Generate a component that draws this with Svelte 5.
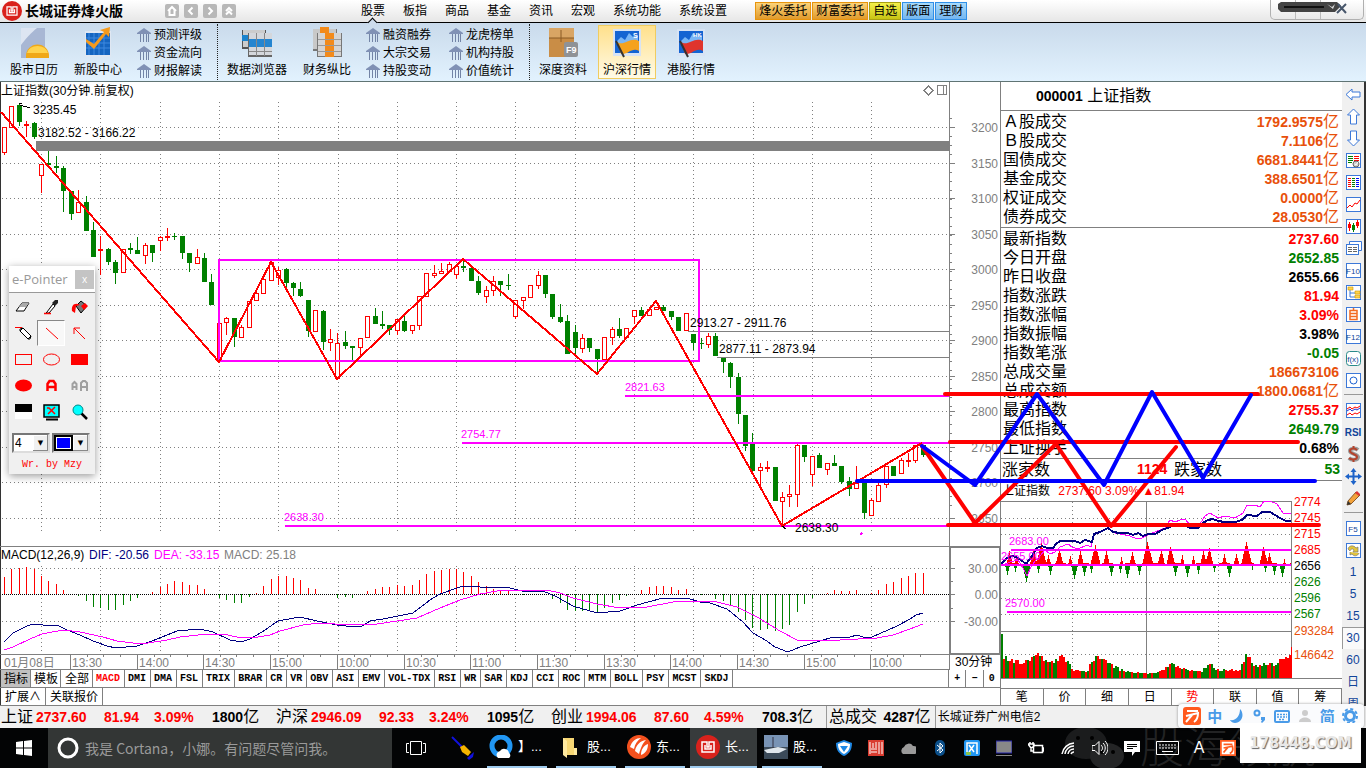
<script>
  const menus = ['股票', '板指', '商品', '基金', '资讯', '宏观', '系统功能', '系统设置']
  const trade = [
    ['烽火委托', 'orange'],
    ['财富委托', 'orange'],
    ['自选', 'yellow'],
    ['版面', 'blue'],
    ['理财', 'blue']
  ]
  const navIcons = ['M3 7l4-4 4 4M4.500 6v5h5V6', 'M8.500 3.500L5 7l3.500 3.500', 'M5.500 3.500L9 7l-3.500 3.500', 'M4 7l3-3 3 3M4 10.500l3-3 3 3']

  // [type, high, top, bottom, low], r = rising, g = falling
  const candles = [
    ['r', 127, 127, 152, 155], ['r', 106, 106, 127, 127], ['g', 103, 105, 122, 126], ['r', 121, 124, 125, 137],
    ['g', 122, 123, 137, 139], ['r', 164, 164, 175, 193], ['g', 151, 163, 165, 165], ['g', 156, 166, 168, 173],
    ['g', 166, 168, 191, 212], ['g', 191, 191, 214, 220], ['r', 190, 202, 212, 212], ['g', 196, 202, 231, 231],
    ['g', 222, 230, 257, 257], ['r', 236, 249, 250, 275], ['g', 248, 249, 262, 265], ['g', 260, 262, 273, 284],
    ['r', 249, 249, 272, 272], ['g', 243, 248, 250, 254], ['g', 237, 250, 254, 254], ['r', 243, 245, 255, 264],
    ['g', 245, 245, 253, 262], ['r', 236, 237, 240, 251], ['r', 228, 236, 236, 241], ['g', 233, 236, 237, 240],
    ['g', 236, 236, 253, 259], ['g', 253, 253, 263, 272], ['r', 249, 257, 263, 263], ['g', 253, 258, 282, 282],
    ['g', 274, 282, 305, 305], ['r', 323, 323, 360, 360], ['r', 317, 318, 322, 335], ['g', 318, 318, 337, 347],
    ['r', 325, 327, 337, 337], ['r', 301, 301, 327, 327], ['r', 290, 293, 300, 300], ['r', 275, 279, 293, 293],
    ['r', 262, 262, 280, 280], ['r', 267, 270, 277, 285], ['g', 268, 269, 283, 288], ['g', 282, 283, 288, 296],
    ['g', 282, 289, 296, 297], ['g', 300, 300, 331, 337], ['r', 310, 310, 331, 331], ['g', 310, 311, 342, 350],
    ['r', 329, 339, 342, 351], ['r', 333, 343, 378, 378], ['g', 331, 342, 346, 349], ['g', 346, 346, 348, 360],
    ['r', 338, 338, 347, 355], ['r', 316, 316, 337, 337], ['g', 308, 316, 324, 324], ['g', 311, 324, 326, 329],
    ['g', 325, 325, 330, 335], ['r', 319, 319, 330, 335], ['g', 315, 321, 331, 332], ['r', 325, 325, 330, 334],
    ['r', 296, 296, 325, 330], ['r', 273, 273, 296, 296], ['r', 265, 273, 275, 278], ['r', 263, 271, 273, 273],
    ['r', 262, 264, 271, 271], ['r', 266, 266, 274, 279], ['g', 260, 266, 268, 272], ['g', 268, 268, 281, 281],
    ['g', 276, 281, 293, 295], ['r', 286, 290, 296, 303], ['r', 276, 281, 290, 296], ['g', 281, 281, 285, 296],
    ['g', 274, 285, 286, 290], ['r', 300, 300, 316, 319], ['r', 297, 297, 300, 309], ['r', 285, 285, 297, 297],
    ['r', 271, 275, 285, 289], ['g', 275, 275, 294, 298], ['g', 294, 294, 317, 319], ['g', 304, 317, 322, 323],
    ['g', 315, 321, 354, 354], ['g', 325, 332, 348, 355], ['r', 334, 338, 348, 353], ['g', 338, 338, 348, 352],
    ['g', 349, 349, 359, 373], ['r', 337, 337, 359, 359], ['r', 327, 329, 337, 345], ['g', 318, 329, 336, 338],
    ['r', 328, 328, 337, 337], ['r', 310, 310, 316, 324], ['g', 307, 310, 316, 316], ['r', 309, 309, 315, 315],
    ['r', 307, 307, 309, 309], ['g', 305, 307, 311, 311], ['g', 311, 311, 317, 320], ['g', 317, 317, 331, 331],
    ['r', 313, 313, 330, 330], ['g', 334, 334, 343, 350], ['g', 338, 343, 344, 349], ['r', 333, 336, 344, 348],
    ['g', 333, 336, 356, 356], ['g', 358, 358, 362, 373], ['g', 362, 363, 377, 388], ['g', 373, 377, 414, 424],
    ['g', 415, 415, 446, 451], ['g', 433, 444, 471, 473], ['r', 463, 467, 470, 489], ['r', 461, 467, 468, 472],
    ['g', 467, 467, 501, 501], ['r', 492, 497, 501, 526], ['r', 485, 494, 496, 507], ['r', 443, 445, 494, 507],
    ['g', 445, 445, 457, 462], ['r', 456, 456, 474, 486], ['g', 453, 455, 468, 468], ['r', 463, 463, 469, 475],
    ['g', 455, 463, 466, 466], ['g', 466, 466, 482, 484], ['g', 477, 481, 489, 496], ['r', 466, 483, 488, 488],
    ['g', 483, 483, 513, 519], ['r', 498, 500, 515, 515], ['r', 483, 485, 501, 501], ['r', 466, 466, 484, 488],
    ['g', 466, 466, 476, 476], ['r', 458, 460, 473, 473], ['r', 453, 460, 461, 467], ['r', 445, 445, 460, 463],
    ['g', 445, 445, 455, 457]
  ]

  const macd = [
    17, 25, 26, 27, 25, 18, 13, 10, 4, 0, -2, -7, -13, -14, -16, -16, -11, -7, -4, 0, 2, 7, 10, 13, 12, 9, 9, 5, 0, -4,
    -6, -9, -9, -3, 1, 8, 15, 18, 18, 16, 14, 6, 5, 0, -1, -4, -3, -4, -1, 3, 5, 7, 7, 9, 8, 9, 14, 20, 23, 24,
    25, 25, 22, 18, 12, 8, 5, 4, 3, 0, -1, 0, 0, 0, -5, -9, -16, -17, -17, -16, -18, -14, -9, -6, -2, 0, 4, 7, 8, 8,
    7, 4, 5, 0, -1, -1, -5, -7, -11, -18, -26, -34, -36, -35, -37, -35, -31, -18, -10, -4, 0, 1, 4, 3, 3, 4, 0, 1, 4, 10,
    12, 16, 18, 21, 21
  ]

  const dif = '4,642 13,633 27,626 33,624 43,625 57,625 67,630 80,635 93,641 107,646 116,648 137,646 152,641 167,635 177,631 200,629 213,632 230,640 241,642 250,639 262,632 278,621 300,617 317,621 337,625 355,627 362,626 370,621 383,619 413,613 430,600 440,594 460,587 470,586 480,587 510,588 522,591 543,591 557,597 573,606 597,613 620,611 637,605 663,598 680,599 687,598 700,602 710,603 727,609 743,622 753,633 767,641 775,647 788,652 800,647 820,641 833,637 850,637 857,635 863,637 872,637 897,626 910,619 916,615 923,613'
  const dea = '4,650 13,647 30,639 42,634 63,630 80,632 103,637 117,641 133,643 148,643 167,640 180,637 207,634 223,634 237,637 258,637 270,635 280,631 303,625 320,623 350,625 377,624 417,618 440,608 460,600 480,594 497,591 513,590 527,591 547,590 560,593 573,598 597,604 620,608 647,607 673,602 697,601 717,602 737,607 757,617 780,631 797,640 813,641 840,640 877,638 893,635 910,629 923,624'

  const cx = (i) => Math.round(4 + i * 7.41)
  const gridX = Array.from({ length: 15 }, (_, i) => Math.round(41 + i * 59.3))
  const levels = Array.from({ length: 12 }, (_, i) => ({ y: Math.round(127 + i * 35.5), label: 3200 - i * 50 }))
  const minor = Array.from({ length: 44 }, (_, i) => Math.round(118 + i * 9))
  const times = ['13:30', '14:00', '14:30', '15:00', '10:00', '10:30', '11:00', '11:30', '13:30', '14:00', '14:30', '15:00', '10:00']

  const indicators = [
    'MACD', 'DMI', 'DMA', 'FSL', 'TRIX', 'BRAR', 'CR', 'VR', 'OBV', 'ASI', 'EMV', 'VOL-TDX', 'RSI',
    'WR', 'SAR', 'KDJ', 'CCI', 'ROC', 'MTM', 'BOLL', 'PSY', 'MCST', 'SKDJ'
  ]

  const turnover = [
    ['Ａ股成交', '1792.9575'], ['Ｂ股成交', '7.1106'], ['国债成交', '6681.8441'],
    ['基金成交', '388.6501'], ['权证成交', '0.0000'], ['债券成交', '28.0530']
  ]
  const quotes = [
    ['最新指数', '2737.60', 'up'], ['今日开盘', '2652.85', 'down'], ['昨日收盘', '2655.66', ''],
    ['指数涨跌', '81.94', 'up'], ['指数涨幅', '3.09%', 'up'], ['指数振幅', '3.98%', ''],
    ['指数笔涨', '-0.05', 'down'], ['总成交量', '186673106', 'vol'], ['总成交额', '1800.0681', 'vol', '亿'],
    ['最高指数', '2755.37', 'up'], ['最低指数', '2649.79', 'down'], ['上证换手', '0.68%', '']
  ]

  const price = '1001,564 1007,558 1012,556 1016,557 1021,560 1026,564 1032,556 1037,548 1042,546 1047,548 1053,548 1056,544 1060,541 1075,541 1080,543 1085,540 1092,542 1094,534 1100,532 1108,528 1113,532 1120,533 1128,533 1133,535 1138,533 1143,536 1148,534 1155,534 1162,530 1170,527 1175,524 1180,524 1185,525 1190,528 1198,528 1201,524 1208,520 1213,519 1218,521 1225,522 1235,522 1242,520 1247,515 1257,516 1262,512 1270,512 1275,515 1280,518 1286,521 1291,521'
  const average = '1001,566 1010,562 1018,560 1023,568 1027,576 1032,565 1036,560 1040,556 1045,550 1050,554 1055,552 1060,547 1068,544 1072,547 1078,549 1087,545 1091,547 1094,535 1108,528 1115,533 1130,536 1137,539 1142,538 1150,534 1165,528 1170,520 1175,522 1180,520 1185,519 1190,525 1200,524 1205,516 1210,513 1218,518 1225,516 1235,518 1243,513 1247,505 1255,505 1260,507 1264,501 1270,501 1277,504 1283,513 1291,514'
  const miniScale = [
    [502, '2774', 'up'], [518, '2745', 'up'], [534, '2715', 'up'], [550, '2685', 'up'], [566, '2656', ''],
    [582, '2626', 'down'], [598, '2596', 'down'], [614, '2567', 'down'], [631, '293284', 'vol'], [655, '146642', 'vol']
  ]

  // [position, height] of each spike, with a short falloff on both sides
  const peaks = [
    [8, 12], [15, 8], [32, 14], [40, 20], [47, 10], [58, 14], [69, 9], [79, 12], [94, 20], [105, 12], [120, 7],
    [131, 11], [146, 22], [160, 14], [169, 17], [181, 8], [192, 8], [202, 12], [208, 16], [223, 9], [235, 11],
    [245, 21], [262, 17], [268, 10], [283, 6]
  ]
  const dips = [
    [6, 9], [14, 6], [25, 16], [37, 7], [49, 9], [73, 13], [83, 10], [90, 7], [110, 10], [119, 7], [126, 12],
    [138, 9], [174, 10], [186, 11], [197, 8], [213, 6], [228, 11], [251, 4], [264, 6], [273, 9], [281, 11]
  ]
  const near = (list, x, fall) => Math.max(0, ...list.map(([p, h]) => h - Math.abs(p - x) * fall))
  const bars = Array.from({ length: 290 }, (_, x) => ({
    x: 1001 + x,
    up: Math.round(near(peaks, x, 4) + Math.abs(Math.sin(x * 12.7)) * 2),
    down: Math.round(near(dips, x, 4))
  }))
  const envelope = [
    [0, 24], [8, 18], [22, 17], [30, 22], [40, 23], [46, 15], [60, 22], [72, 9], [85, 7], [93, 22], [106, 16],
    [120, 8], [140, 5], [155, 5], [170, 16], [180, 10], [200, 7], [208, 17], [215, 9], [238, 8], [245, 24],
    [255, 11], [262, 15], [275, 14], [282, 23], [290, 22]
  ]
  const noise = (i) => {
    const n = Math.sin(i * 91.7) * 437.5
    return n - Math.floor(n)
  }
  const volume = Array.from({ length: 145 }, (_, i) => {
    const x = i * 2
    const k = envelope.findIndex(([p]) => p > x)
    const [x0, h0] = envelope[k - 1]
    const [x1, h1] = envelope[k]
    const h = h0 + ((h1 - h0) * (x - x0)) / (x1 - x0)
    return { x: 1001 + x, h: i === 0 ? 44 : Math.max(3, Math.round(h * (0.8 + 0.3 * noise(i)))), rise: noise(i + 40) > 0.45 }
  })

  const panelTabs = ['笔', '价', '细', '日', '势', '联', '值', '筹']

  const frame = '<rect x="2.500" y="2.500" width="14" height="14" fill="#fff" stroke="#3c78d8"/>'
  const tools = [
    ['后退', '<path d="M2 9.500l6-5.500v3h8v5H8v3z" fill="#fff" stroke="#3c78d8"/>'],
    ['上移', '<path d="M9.500 2l6 6h-3v9h-6V8h-3z" fill="#fff" stroke="#3c78d8"/>'],
    ['下移', '<path d="M9.500 17l6-6h-3V2h-6v9h-3z" fill="#fff" stroke="#3c78d8"/>'],
    ['行情', frame + '<path d="M4 5.500h5M4 7.500h5M4 9.500h5M4 11.500h4" stroke="#008000"/><path d="M10 5.500h5M10 7.500h5M10 9.500h5" stroke="red"/><circle cx="12" cy="13" r="3" fill="#ccc" stroke="#666"/><path d="M10.500 13l1.500 1 2-3" stroke="#fff" fill="none"/>'],
    ['列表', frame + '<path d="M4 5.500h3M4 7.500h3M4 9.500h3M4 11.500h3M4 13.500h3" stroke="red"/><path d="M8 5.500h3M8 7.500h3M8 9.500h3M8 11.500h3M8 13.500h3" stroke="green"/><path d="M12 5.500h3M12 7.500h3M12 9.500h3M12 11.500h3M12 13.500h3" stroke="blue"/>'],
    ['分时', frame + '<path d="M3 13l3-3 2 2 3-4 2 1 3-4" stroke="red" fill="none"/>'],
    ['K线', frame + '<path d="M5.500 5v9M13.500 3v8" stroke="red"/><path d="M9.500 6v9" stroke="green"/><path d="M4 7h3v4H4zM12 5h3v4h-3z" fill="red"/><path d="M8 8h3v5H8z" fill="green"/>'],
    ['多窗口', '<path d="M5.500 5V2.500h12v9H15" fill="#fff" stroke="#3c78d8"/><rect x="2.500" y="5.500" width="12" height="10" fill="#fff" stroke="#3c78d8"/><path d="M4 8.500h4M9 8.500h4M4 10.500h4M9 10.500h4M4 12.500h4M9 12.500h4" stroke="#666"/>'],
    ['F10', frame, 'F10'],
    ['树形', frame + '<path d="M6 6v8h5M6 10h5" stroke="#3c78d8" fill="none"/><path d="M4 4h5v3H4zM11 8h5v3h-5zM11 12h5v3h-5z" fill="#ffd34d" stroke="#c90" stroke-width=".6"/>'],
    ['自选', frame + '<path d="M6 5.500h7v9H6zM6 8.500h7M6 11.500h7M9.500 3v2" stroke="#f26a21" stroke-width="1.500" fill="none"/>'],
    ['F12', frame, 'F12'],
    ['公式', '<rect x="2.500" y="2.500" width="14" height="14" rx="3" fill="#fff" stroke="#2a8a8a"/>', 'f(x)'],
    ['圆', frame + '<circle cx="9.500" cy="9.500" r="3.500" fill="none" stroke="#1a5fd0"/>'],
    null,
    ['叠加', frame + '<path d="M3 8l3-2 2 2 3-2 2 1 3-2" stroke="red" fill="none"/><path d="M3 10l3-2 2 2 3-2 2 1 3-2" stroke="#23c" fill="none"/><path d="M3 14l3-2 2 2 3-2 2 1 3-2" stroke="red" fill="none"/>'],
    ['RSI', '', 'RSI'],
    ['交易', '<path d="M14 5c-2-2-8-2-8 1s8 3 8 6-6 4-9 1" fill="none" stroke="#999" stroke-width="4"/><path d="M13 5c-2-2-7-2-7 1s7 3 7 6-6 3-8 1M9.500 1v3M9.500 14v3" fill="none" stroke="#b5432c" stroke-width="2"/>'],
    ['移动', '<path d="M9.500 1l3 4h-2v3.500H14v-2l4 3-4 3v-2h-3.500V14h2l-3 4-3-4h2v-3.500H5v2l-4-3 4-3v2h3.500V5h-2z" fill="#1d63c9"/>'],
    ['画线', '<path d="M3 16l1-4 8-9 4 3-9 9z" fill="#f2a23a" stroke="#8a5a2a"/><path d="M11 4l2-2 3 3-1 2z" fill="#d33"/><path d="M3 16l1-4 3 3z" fill="#333"/>'],
    null,
    ['F5', frame, 'F5'],
    ['刷新', frame + '<path d="M4 8c1-4 6-4 8-1l2-1v5H9l1-2c-2-2-3-1-4 1zM15 12c-1 3-5 4-7 1l-2 1v-3" fill="#e3c53a" stroke="#777" stroke-width=".7"/>'],
    ['1分钟', '', '1'], ['5分钟', '', '5'], ['15分钟', '', '15'], ['30分钟', '', '30'], ['60分钟', '', '60'],
    ['日线', '', '日'], ['周线', '', '周']
  ]

  const pens = [
    ['橡皮', '<path d="M2 13l6-8h7l-5 8z" fill="#fff" stroke="#000"/><path d="M8 5h7l-3 4H5z" fill="#aaa"/>'],
    ['取色', '<path d="M5 14l6-8 2 2-6 7H4z" fill="#fff" stroke="#000"/><path d="M10 5l3-3h3v3l-3 3z" fill="#222"/><path d="M2 15.500h7" stroke="red" stroke-width="1.500"/>'],
    ['填充', '<path d="M6 8l5-5 6 5-6 7z" fill="#777" stroke="#000"/><path d="M2 13c-1-6 3-9 8-6l-4 1-1 7zM11 8l4-3 3 3-4 4z" fill="red"/>'],
    ['铅笔', '<path d="M1 3.500h7" stroke="red"/><path d="M6 5l3-1 8 8-1 3h-2L6 7z" fill="#fff" stroke="#000"/><path d="M9 4l-3 3M14 15l3-3" stroke="#000"/>'],
    ['直线', '<path d="M4 4l12 11" stroke="red"/>'],
    ['箭头', '<path d="M15 15L4 4M4 10V4h6" stroke="red" fill="none"/>'],
    ['矩形', '<rect x="1.500" y="4.500" width="16" height="10" fill="none" stroke="red"/>'],
    ['椭圆', '<ellipse cx="9.500" cy="9.500" rx="8" ry="5.500" fill="none" stroke="red"/>'],
    ['实心矩形', '<rect x="1" y="4" width="17" height="11" fill="red"/>'],
    ['实心椭圆', '<ellipse cx="9.500" cy="9.500" rx="8.500" ry="6" fill="red"/>'],
    ['文字', '<path d="M5.500 15V8l2-3h4l2 3v7M6 11h7" fill="none" stroke="red" stroke-width="2.500"/>'],
    ['多行文字', '<path d="M2.500 14V8l2-2 2 2v6M3 11h3M11 15V7l2-2h2l2 2v8M11 11h6" fill="none" stroke="#a0a0a0" stroke-width="2"/>'],
    ['黑白板', '<path d="M1 2h17v8H1z"/><path d="M1 10h17v7H1z" fill="#fff"/>'],
    ['屏幕', '<rect x="2" y="3" width="15" height="12" fill="#0ff" stroke="#000" stroke-width="1.500"/><path d="M5 6h2l6 6M13 5l-7 7" stroke="red" stroke-width="1.500" fill="none"/><path d="M4 17.500h12" stroke="#000" stroke-width="2"/>'],
    ['放大', '<path d="M11 11l6 6" stroke="#000" stroke-width="2.500"/><circle cx="8" cy="8" r="5" fill="#0ff" stroke="#088"/>']
  ]

  const footer = [
    ['上证', '2737.60', '81.94', '3.09%', '1800'],
    ['沪深', '2946.09', '92.33', '3.24%', '1095'],
    ['创业', '1994.06', '87.60', '4.59%', '708.3']
  ]

  const swirl = '<circle cx="12" cy="12" r="12" fill="#d9221c"/><path d="M6 7h5v5h2V7h5v10H6zM9 10v4h6v-4" fill="none" stroke="#fff" stroke-width="1.500"/>'
  const apps = [
    ['】...', '<circle cx="12" cy="11" r="9" fill="none" stroke="#2196f3" stroke-width="5"/><path d="M9 23a4 4 0 0 1 2-7 5 5 0 0 1 9 2 3 3 0 0 1 0 5z" fill="#fff"/>'],
    ['股...', '<path d="M5 3h11v17H5z" fill="#f7d774"/><path d="M5 3l4 3v17l-4-3zM16 13h3v7h-3z" fill="#ffe9a0"/>'],
    ['东...', '<circle cx="12" cy="12" r="12" fill="#f4511e"/><path d="M3 12c2-6 6-9 11-9-4 3-6 6-7 11zM8 16c1-6 5-10 11-11-4 4-5 8-7 14zM14 20c0-5 2-9 7-11 0 5-2 9-7 11z" fill="#fff"/>'],
    ['长...', swirl],
    ['股...', '<path d="M0 0h24v24H0z" fill="#7893b5"/><path d="M0 12h24v12H0z" fill="#3b4a59"/><path d="M0 15l14-3 9 2-8 4H3z" fill="#dfe6ec"/><path d="M9 2v11" stroke="#334"/>']
  ]
  const tray = [
    ['安全', '<path d="M8 0l8 3c0 7-3 11-8 13C3 14 0 10 0 3z" fill="#1e88e5"/><path d="M8 2l6 2c0 5-2 8-6 10-4-2-6-5-6-10z" fill="#fff"/><path d="M4 6h8l-4 6z" fill="#1e88e5"/>'],
    ['同花顺', '<path d="M0 0h16v16H0z" fill="#d93c30"/><path d="M2 2v12M5 3v5M8 2v6M11 2v12M14 2v12M3 9h6M3 12h6" stroke="#fff"/>'],
    ['云', '<path d="M3 14a4 4 0 0 1 1-7 5 5 0 0 1 9-1 4 4 0 0 1 1 8z" fill="#9a9a9a"/>'],
    ['蓝牙', '<rect x="3" width="10" height="16" rx="5" fill="#0b4f8a"/><path d="M5 5l6 5-3 3V3l3 3-6 5" stroke="#fff" fill="none"/>'],
    ['网络', '<rect width="16" height="16" rx="2" fill="#2196f3"/><path d="M3 14V3h10v11M5 5l5 7M10 5l-5 7" stroke="#fff" fill="none" stroke-width="1.500"/><path d="M2 12h5v3H2z" fill="#8bc34a"/>'],
    ['显示', '<rect x="0" y="1" width="16" height="12" fill="#888" stroke="#22a"/><path d="M0 15.500h16" stroke="#888"/>'],
    ['电源', '<path d="M5.500 5.500h9v7h-9zM15 8h1v3h-1M2 2v2M5 2v2M0 4h6v2L3 8zM3 8v3h2" fill="none" stroke="#fff" stroke-width="1.500"/>'],
    ['无线', '<path d="M2 14A13 13 0 0 1 14 3M5 14a9 9 0 0 1 9-8M8 14a6 6 0 0 1 6-5M11 14a3 3 0 0 1 3-2" fill="none" stroke="#fff" stroke-width="1.500"/>'],
    ['音量', '<path d="M0 5.500h3l4-4v13l-4-4H0zM9 5c2 2 2 4 0 6M11 3c3 3 3 7 0 10M13 1c4 4 4 10 0 14" fill="none" stroke="#fff"/>'],
    ['通知', '<path d="M0 1h16v11h-5l-3 4v-4H0z" fill="#fff"/><path d="M3 4.500h10M3 6.500h10M3 8.500h6" stroke="#000"/>']
  ]
</script>

{#snippet house(label)}
  <a href="#{label}" class="mini-link">
    <svg width="14" height="14" viewBox="0 0 14 14"><path d="M7 0l7 5v1H0V5z" fill="#8091b5" /><path d="M3.500 6v8M6.500 6v8M9.500 6v8M11.500 6v8" stroke="#7384a6" /></svg>
    {label}
  </a>
{/snippet}

<div class="app">
  <header class="titlebar">
    <h1 class="brand">
      <svg width="20" height="20" viewBox="0 0 24 24">{@html swirl}</svg>
      长城证券烽火版
    </h1>
    <div class="nav">
      {#each navIcons as d, i}
        <button aria-label="导航{i + 1}"><svg width="14" height="14" viewBox="0 0 14 14"><path {d} fill="none" stroke="#fff" stroke-width="2" /></svg></button>
      {/each}
    </div>
    <nav class="menus">
      {#each menus as m, i}
        <a href="#{m}" class:current={i === 0}>{m}</a>
      {/each}
    </nav>
    <div class="trade">
      {#each trade as [label, tone]}
        <button class={tone}>{label}</button>
      {/each}
    </div>
    <div class="window-box">
      <svg width="92" height="20" viewBox="0 0 92 20">
        <path d="M24.500 0v19M49.500 0v19" stroke="#bbb" />
        <path d="M10 2h56l4 4-6 6H10l-3-3V4z" fill="#444" /><path d="M13 7h40" stroke="#111" stroke-width="2" />
        <path d="M56 4l5 3 3-3-2 5z" fill="#ddd" /><path d="M67 4l8 9M75 4l-9 9" stroke="#47566b" stroke-width="2" />
      </svg>
    </div>
  </header>

  <div class="ribbon">
    <button class="tool">
      <svg width="30" height="32" viewBox="0 0 30 32"><path d="M2 1h24v30H2z" fill="#a8b7d4" /><path d="M2 1h16C12 6 8 10 2 18z" fill="#dde5f2" /><path d="M7 31v-2a11 11 0 0 1 23 0v2z" fill="#f0a818" /><path d="M8 26a11 10 0 0 1 21 0z" fill="#ffd34d" /></svg>
      股市日历
    </button>
    <button class="tool">
      <svg width="30" height="32" viewBox="0 0 30 32"><path d="M2 4h26v26H2z" fill="#dfe7f2" /><path d="M3 6h24v22H3z" fill="#1565c0" /><path d="M6 6v22M11 6v22M16 6v22M21 6v22M3 11h24M3 16h24M3 21h24" stroke="#3f8ae0" /><path d="M3 12l8 5L21 5l-4-2 10-3-1 10-3-3-12 15-8-7z" fill="#f59a1c" /></svg>
      新股中心
    </button>
    <div class="links first">{@render house('预测评级')}{@render house('资金流向')}{@render house('财报解读')}</div>
    <i class="sep"></i>
    <button class="tool wide">
      <svg width="30" height="32" viewBox="0 0 30 32"><path d="M0 3h24v19H0z" fill="#555" /><path d="M1 3h22v5H1zM1 14h22v6H1z" fill="#ccc" /><path d="M0 8h8v6H0z" fill="#1c83cc" /><path d="M6 6h24v24H6z" fill="#666" /><path d="M7 6h23v6H7zM7 20h23v8H7z" fill="#d4d7dc" /><path d="M7 12h23v8H7z" fill="#2585d0" /><path d="M14.500 6v23M22.500 6v23M7 24.500h23" stroke="#888" /></svg>
      数据浏览器
    </button>
    <button class="tool wide">
      <svg width="30" height="32" viewBox="0 0 30 32"><path d="M1 2h24v22H1z" fill="#777" /><path d="M1 2h7v20H1zM17 2h7v5h-7z" fill="#c8c8c8" /><path d="M8 0h9v7H8z" fill="#f28a1a" /><path d="M5 6h25v24H5z" fill="#777" /><path d="M6 6h23v23H6z" fill="#d4d4d4" /><path d="M13 6h9v24h-9z" fill="#f28a1a" /><path d="M6 12.500h23M6 18.500h23M6 24.500h23" stroke="#999" /></svg>
      财务纵比
    </button>
    <div class="links">{@render house('融资融券')}{@render house('大宗交易')}{@render house('持股变动')}</div>
    <div class="links second">{@render house('龙虎榜单')}{@render house('机构持股')}{@render house('价值统计')}</div>
    <i class="sep"></i>
    <button class="tool">
      <svg width="30" height="32" viewBox="0 0 30 32"><path d="M1 1h25v29H1z" fill="#c98d46" /><path d="M1 1h25v10H1z" fill="#d9a564" /><path d="M1 11h25M13 3v12" stroke="#8a5a24" /><rect x="16" y="15" width="14" height="15" rx="2" fill="#8f9296" /><text x="18" y="26" font-size="9" font-weight="700" fill="#fff">F9</text></svg>
      深度资料
    </button>
    <button class="tool active">
      <svg width="30" height="32" viewBox="0 0 30 32"><path d="M1 2h28v27H1z" fill="#d7e3f4" /><path d="M3 4h24v22H3z" fill="#1464d2" /><path d="M4 15l5-5 4 3 4-7 4 4 5-2v9H4z" fill="#7ab6f5" /><path d="M5 15c7 5 13-6 22-1v10c-8-4-10 4-18 3z" fill="#f5a21d" /><path d="M4 14l8 16" stroke="#333" stroke-width="2" /><text x="21" y="11" font-size="7" font-weight="700" fill="#fff">S</text></svg>
      沪深行情
    </button>
    <button class="tool">
      <svg width="30" height="32" viewBox="0 0 30 32"><path d="M1 2h28v27H1z" fill="#d7e3f4" /><path d="M3 4h24v22H3z" fill="#1464d2" /><path d="M4 15l5-5 4 3 4-7 4 4 5-2v9H4z" fill="#7ab6f5" /><path d="M5 15c7 5 13-6 22-1v10c-8-4-10 4-18 3z" fill="#e0342c" /><path d="M4 14l8 16" stroke="#333" stroke-width="2" /><text x="17" y="10" font-size="6" font-weight="700" fill="#fff">HK</text></svg>
      港股行情
    </button>
  </div>

  <main class="main">
    <section class="charts">
      <svg class="kline" viewBox="0 82 1000 588" shape-rendering="crispEdges">
        <g stroke="#808080" stroke-dasharray="1 3">
          {#each levels as l}<path d="M2 {l.y}.500H949" />{/each}
          {#each gridX as x}<path d="M{x}.500 102V531M{x}.500 566V653" />{/each}
          <path d="M2 568.500H949M2 621.500H949" />
        </g>
        <path d="M0 546.500H1000M0 654.500H949M949.500 82V670M0 669.500H949" stroke="#808080" />
        <rect x="950" y="547" width="50" height="107" fill="none" stroke="#808080" stroke-width="2" />
        <path d="M36 141h913v10H36z" fill="#808080" />
        <path d="M688 331.500H949M717 357.500H949" stroke="#808080" />

        {#each candles as [type, high, top, bottom, low], i}
          {@const x = cx(i)}
          {#if type === 'g'}
            <path d="M{x}.500 {high}V{low}" stroke="green" />
            <rect x={x - 2} y={top} width="5" height={Math.max(1, bottom - top)} fill="green" />
          {:else}
            <path d="M{x}.500 {high}V{top}M{x}.500 {bottom}V{low}" stroke="red" />
            <rect x={x - 1.5} y={top + 0.5} width="4" height={Math.max(1, bottom - top)} fill="#fff" stroke="red" />
          {/if}
        {/each}

        <g fill="none" stroke="#f0f" stroke-width="2">
          <path d="M219 260H699V361H219zM625 396H949M462 443H949M285 526H949M860 535l2-2" />
        </g>
        <path d="M1 112L219 362 271 262 337 379 463 259 597 374 656 301 782 526 922 443" fill="none" stroke="red" stroke-width="2" />
        <path d="M19 103h3M20 105l10 3M782 526l4 3" stroke="#000" fill="none" />

        <g class="label">
          <text x="1" y="95">上证指数(30分钟.前复权)</text>
          <text x="33" y="114">3235.45</text>
          <text x="38" y="137">3182.52 - 3166.22</text>
          <text x="690" y="327">2913.27 - 2911.76</text>
          <text x="719" y="353">2877.11 - 2873.94</text>
          <text x="795" y="532">2638.30</text>
        </g>
        <g class="label small magenta">
          <text x="625" y="391">2821.63</text>
          <text x="461" y="438">2754.77</text>
          <text x="284" y="521">2638.30</text>
        </g>
        <path d="M928.500 86l4.500 4.500-4.500 4.500-4.500-4.500zM937.500 85.500h9v9h-9zM943.500 85v10" fill="none" stroke="#808080" />

        <g stroke="#808080">
          {#each levels as l}<path d="M950 {l.y}.500h5" />{/each}
          {#each minor as y}<path d="M950 {y}.500h2" />{/each}
          <path d="M951 568.500h4M951 594.500h4M951 621.500h4M951 581.500h2M951 608.500h2" />
        </g>
        <g class="label gray" text-anchor="end">
          {#each levels as l}<text x="998" y={l.y + 5}>{l.label}</text>{/each}
          <text x="998" y="573">30.00</text>
          <text x="998" y="599">0.00</text>
          <text x="998" y="626">-30.00</text>
        </g>

        <g class="label">
          <text x="1" y="559">MACD(12,26,9)</text>
          <text x="89" y="559" fill="#000080">DIF: -20.56</text>
          <text x="154" y="559" fill="#f0f">DEA: -33.15</text>
          <text x="224" y="559" fill="#808080">MACD: 25.18</text>
        </g>
        {#each macd as h, i}
          {#if h}<path d="M{cx(i)}.500 594v{-h}" stroke={h > 0 ? 'red' : 'green'} />{/if}
        {/each}
        <path d="M2 594.500H949" stroke="#000" stroke-dasharray="1 1" />
        <polyline points={dif} fill="none" stroke="#000080" />
        <polyline points={dea} fill="none" stroke="#f0f" />

        <g class="label gray">
          <text x="4" y="667">01月08日</text>
          {#each times as t, i}
            {@const x = Math.round(70 + i * 66.7)}
            <path d="M{x}.500 655v15M{x + 17}.500 655v2M{x + 33}.500 655v2M{x + 50}.500 655v2" stroke="#808080" />
            <text x={x + 2} y="667">{t}</text>
          {/each}
        </g>
        <text class="label" x="955" y="666">30分钟</text>
      </svg>
      <div class="tabs">
        <button class="cjk on">指标</button>
        <button class="cjk">模板</button>
        <button class="cjk">全部</button>
        {#each indicators as name, i}
          <button class:red={i === 0}>{name}</button>
        {/each}
        <div class="zoom">
          <button>+</button>
          <button>−</button>
          <button>0</button>
        </div>
      </div>
      <div class="tabs lower">
        <button class="cjk">扩展∧</button>
        <button class="cjk">关联报价</button>
      </div>
    </section>

    <section class="panel">
      <h2><b>000001</b> 上证指数</h2>
      <table>
        <tbody>
          {#each turnover as [name, value]}
            <tr><th>{name}</th><td class="vol"><b>{value}</b>亿</td></tr>
          {/each}
        </tbody>
      </table>
      <table>
        <tbody>
          {#each quotes as [name, value, tone, unit]}
            <tr><th>{name}</th><td class={tone}><b>{value}</b>{unit ?? ''}</td></tr>
          {/each}
        </tbody>
      </table>
      <div class="breadth">
        <span>涨家数</span><b class="up">1124</b><span>跌家数</span><b class="down">53</b>
      </div>
      <div class="caption">上证指数 <span class="up">2737.60 3.09% ▲81.94</span></div>
      <svg class="intraday" viewBox="1001 501 341 187" shape-rendering="crispEdges">
        <g stroke="#808080" stroke-dasharray="1 3">
          <path d="M1001 518.500h290M1001 534.500h290M1001 582.500h290M1001 598.500h290M1001 614.500h290M1001 654.500h290M1072.500 502v176M1218.500 502v176" />
        </g>
        <path d="M1001 501.500h290.500V678M1146.500 502v176M1001 631.500h290M1001 678.500h341" fill="none" stroke="#808080" />
        {#each bars as b}
          <rect x={b.x} y={565 - b.up} width="1" height={b.up} fill="red" />
          <rect x={b.x} y="566" width="1" height={b.down} fill="green" />
        {/each}
        {#each volume as v}
          <rect x={v.x} y={678 - v.h} width="2" height={v.h} fill={v.rise ? 'red' : 'green'} />
        {/each}
        <path d="M1291.500 647v31" stroke="red" />
        <polyline points={average} fill="none" stroke="#f0f" />
        <polyline points={price} fill="none" stroke="#000080" stroke-width="2" />
        <path d="M1011 550h280M1001 565h290M1007 612h284" stroke="#f0f" stroke-width="2" />
        <g class="label small magenta">
          <text x="1009" y="545">2683.00</text>
          <text x="1001" y="560">2655.00</text>
          <text x="1005" y="607">2570.00</text>
        </g>
        {#each miniScale as [y, label, tone]}
          <text class="label {tone}" x="1294" y={y + 4}>{label}</text>
        {/each}
      </svg>
      <div class="panel-tabs">
        {#each panelTabs as t}
          <button class:red={t === '势'}>{t}</button>
        {/each}
      </div>
    </section>

    <aside class="side">
      {#each tools as tool}
        {#if tool}
          <button aria-label={tool[0]} class:pressed={tool[2] === '30'}>
            <svg width="19" height="19" viewBox="0 0 19 19">
              {@html tool[1]}
              {#if tool[2]}
                <text class:narrow={/^F|^f/.test(tool[2])} class:bold={tool[2] === 'RSI'} x="9" y="13" text-anchor="middle">{tool[2]}</text>
              {/if}
            </svg>
          </button>
        {:else}
          <hr />
        {/if}
      {/each}
    </aside>

    <svg class="overlay" viewBox="0 82 1366 624">
      <g fill="none" stroke-width="4" stroke-linejoin="round" stroke-linecap="round">
        <path d="M945 394H1258M950 442H1298M948 525H1319M922 446L975 523 1056 444 1111 526 1176 447" stroke="red" />
        <path d="M857 481H1315M922 446L975 485 1037 394 1104 485 1152 392 1203 478 1251 395" stroke="#00f" />
      </g>
    </svg>
  </main>

  <footer class="status">
    {#each footer as [name, last, change, rate, amount]}
      <div class="index">
        <span>{name}</span><b class="up">{last}</b><b class="up">{change}</b><b class="up">{rate}</b><span><b>{amount}</b>亿</span>
      </div>
    {/each}
    <div class="total">总成交 <b>4287</b>亿</div>
    <div class="server">长城证券广州电信2</div>
  </footer>

  <div class="taskbar">
    <span class="ghost">
      <svg width="60" height="40" viewBox="0 0 60 40"><ellipse cx="22" cy="15" rx="21" ry="16" fill="#1b1c1d" /><ellipse cx="43" cy="28" rx="17" ry="13" fill="#242526" /><circle cx="14" cy="10" r="2" /><circle cx="28" cy="10" r="2" /><circle cx="38" cy="24" r="2" /><circle cx="49" cy="24" r="2" /></svg>
      股海领航
    </span>
    <button class="start" aria-label="开始">
      <svg width="16" height="16" viewBox="0 0 16 16"><path d="M0 2l7-1v6.500H0zM8 1l8-1v7.500H8zM0 8.500h7V15l-7-1zM8 8.500h8V16l-8-1z" fill="#fff" /></svg>
    </button>
    <label class="search">
      <svg width="22" height="22" viewBox="0 0 22 22"><circle cx="11" cy="11" r="9" fill="none" stroke="#fff" stroke-width="3" /></svg>
      <input type="text" aria-label="搜索" placeholder="我是 Cortana，小娜。有问题尽管问我。" />
    </label>
    <button class="plain" aria-label="任务视图">
      <svg width="20" height="16" viewBox="0 0 20 16"><path d="M4.500 1.500h11v13h-11zM3 3.500H.500v9H3M17 3.500h2.500v9H17" fill="none" stroke="#fff" /></svg>
    </button>
    <button class="plain" aria-label="e-Pointer">
      <svg width="24" height="24" viewBox="0 0 24 24"><path d="M1 1l10 10" stroke="#11d" stroke-width="2" /><path d="M9 11l4-2 7 7-3 4-6-4z" fill="#f5b400" /><path d="M16 22l7-6-1 5-4 3z" fill="#11d" /></svg>
    </button>
    <div class="apps">
      {#each apps as [label, icon], i}
        <button class:current={i === 3}>
          <svg width="24" height="24" viewBox="0 0 24 24">{@html icon}</svg>
          {label}
        </button>
      {/each}
    </div>
    <div class="tray">
      {#each tray as [label, icon]}
        <button aria-label={label}><svg width="16" height="16" viewBox="0 0 16 16">{@html icon}</svg></button>
      {/each}
      <button class="keys" aria-label="键盘"><svg width="23" height="14" viewBox="0 0 23 14"><path d="M.500.500h22v13H.500z" fill="none" stroke="#fff" /><path d="M3 4h17M3 7h17" stroke="#fff" stroke-dasharray="2 1" /><path d="M6 10.500h11" stroke="#fff" /></svg></button>
      <button class="lang">A</button>
      <button class="sogou" aria-label="输入法"><svg width="16" height="16" viewBox="0 0 18 18"><path d="M1 1h16v16H1z" fill="#fff" stroke="#ff5a1f" stroke-width="2" /><path d="M4 5h10M4 9l10-2c1 4 0 7-3 8M9 8l-5 6" stroke="#ff5a1f" stroke-width="2" fill="none" /></svg></button>
    </div>
  </div>

  <section class="pointer">
    <header>e-Pointer <button aria-label="关闭">x</button></header>
    <div class="pens">
      {#each pens as [label, icon], i}
        <button aria-label={label} class:picked={i === 4}><svg width="19" height="19" viewBox="0 0 19 19">{@html icon}</svg></button>
      {/each}
    </div>
    <div class="combos">
      <div class="combo"><select aria-label="线宽"><option>4</option></select><i>▼</i></div>
      <button class="combo colour" aria-label="颜色"><span></span><i>▼</i></button>
    </div>
    <p>Wr. by Mzy</p>
  </section>

  <div class="ime">
    <button aria-label="拼音"><svg width="18" height="18" viewBox="0 0 18 18"><rect width="18" height="18" rx="3" fill="#ff5a1f" /><path d="M4 4h11M3 9l12-3c0 4-1 7-4 9M9 8l-6 7" stroke="#fff" stroke-width="2" fill="none" /></svg></button>
    <button>中</button>
    <button aria-label="半角"><svg width="14" height="14" viewBox="0 0 14 14"><path d="M10 0c5 5 2 14-5 14-2 0-4-1-5-3 6 1 10-4 10-11z" fill="#4a9be8" /></svg></button>
    <button aria-label="标点"><svg width="14" height="14" viewBox="0 0 14 14"><circle cx="4" cy="4" r="2.500" fill="none" stroke="#4a9be8" stroke-width="2" /><path d="M8 8h4v3l-3 3-1-1 1-2H8z" fill="#4a9be8" /></svg></button>
    <button aria-label="软键盘"><svg width="16" height="13" viewBox="0 0 16 13"><rect x="1" y="1" width="14" height="11" rx="1" fill="none" stroke="#4a9be8" stroke-width="2" /><path d="M3 4.500h10M3 7h10M5 9.500h6" stroke="#4a9be8" stroke-width="1.500" stroke-dasharray="2 1" /></svg></button>
    <button aria-label="账户"><svg width="14" height="14" viewBox="0 0 14 14"><circle cx="7" cy="4" r="3" fill="#ccc" /><path d="M1 13c0-6 12-6 12 0z" fill="#ccc" /></svg></button>
    <button>简</button>
    <button aria-label="设置"><svg width="16" height="16" viewBox="0 0 16 16"><circle cx="8" cy="8" r="4.500" fill="none" stroke="#4a9be8" stroke-width="3" /><circle cx="8" cy="8" r="7" fill="none" stroke="#4a9be8" stroke-width="2" stroke-dasharray="3 2.500" /></svg></button>
  </div>
  <div class="site">178448.COM</div>
</div>

<style>
  :global(body) {
    background: #fff;
  }

  .app {
    position: relative;
    font: 12px/18px "Liberation Sans", "Noto Sans CJK SC", sans-serif;
    color: #000;
    overflow: hidden;
  }

  button {
    border: 0;
    padding: 0;
    background: none;
    color: inherit;
    font: inherit;
    white-space: nowrap;
  }

  a {
    color: inherit;
    text-decoration: none;
  }

  svg {
    flex-shrink: 0;
  }

  .up { color: red; fill: red; }
  .down { color: green; fill: green; }
  .vol { color: #e8500a; fill: #e8500a; }

  .titlebar {
    display: flex;
    align-items: center;
    height: 22px;
    border-bottom: 1px solid #000;
    background: linear-gradient(#fff, #e6e6e6);
  }

  .brand {
    display: flex;
    align-items: center;
    gap: 3px;
    width: 163px;
    margin: 0 0 0 2px;
    font-size: 14px;
    font-weight: 700;
  }

  .nav {
    display: flex;
    gap: 5px;
  }

  .nav button {
    display: flex;
    border-radius: 2px;
    background: #b8b8b8;
  }

  .menus {
    display: flex;
    gap: 18px;
    margin-left: 125px;
  }

  .menus a {
    position: relative;
  }

  .menus .current::after {
    content: "";
    position: absolute;
    left: 8px;
    bottom: -6px;
    width: 6px;
    height: 6px;
    border: solid #000;
    border-width: 1px 0 0 1px;
    background: #cddcec;
    transform: rotate(45deg);
  }

  .trade {
    display: flex;
    gap: 1px;
    margin-left: 28px;
  }

  .trade button {
    padding: 0 3px;
    border: 1px solid #e8940c;
    line-height: 16px;
    background: linear-gradient(#fbd37a, #e09a2c);
  }

  .trade .yellow {
    border-color: #a8a010;
    background: linear-gradient(#f4f04a, #c8c414);
  }

  .trade .blue {
    border-color: #2f8fe8;
    background: linear-gradient(#a8dafa, #74b6f0);
  }

  .window-box {
    display: flex;
    align-self: flex-start;
    margin: 0 2px 0 auto;
    border: solid #b0b0b0;
    border-width: 0 1px 1px;
    border-radius: 0 0 5px 5px;
    height: 19px;
    overflow: hidden;
  }

  .ribbon {
    display: flex;
    align-items: flex-start;
    height: 58px;
    padding-left: 2px;
    border-bottom: 1px solid #607474;
    background: linear-gradient(#c9daeb, #e2f2fe);
  }

  .tool {
    display: flex;
    flex-direction: column;
    align-items: center;
    justify-content: space-between;
    width: 58px;
    height: 54px;
    margin: 2px 3px 0;
    padding: 2px 0 0;
    line-height: 18px;
  }

  .tool.wide {
    width: 64px;
  }

  .tool.active {
    background: linear-gradient(#ffe08a, #fffbe8);
    box-shadow: inset 0 0 0 1px #f0cc60;
  }

  .links {
    display: flex;
    flex-direction: column;
    width: 64px;
    margin: 3px 0 0 4px;
  }

  .links.first {
    margin-left: 7px;
  }

  .links.second {
    margin-left: 19px;
  }

  .mini-link {
    display: flex;
    align-items: center;
    gap: 3px;
    white-space: nowrap;
  }

  .sep {
    height: 56px;
    margin: 1px 1px 0 16px;
    border-left: 1px dotted #222;
  }

  .links.first + .sep {
    margin-right: 4px;
  }

  .main {
    position: relative;
    display: flex;
  }

  .charts {
    flex: 1;
    min-width: 0;
  }

  .kline,
  .intraday {
    display: block;
    width: 100%;
  }

  .kline {
    box-shadow: inset 1px 0 #333;
  }

  .intraday {
    overflow: visible;
  }

  .label {
    font-size: 12px;
  }

  .label.small {
    font-size: 11px;
  }

  .gray text {
    fill: #808080;
  }

  .magenta text {
    fill: #f0f;
  }

  .overlay {
    position: absolute;
    inset: 0;
    width: 100%;
    pointer-events: none;
  }

  .tabs {
    display: flex;
    height: 17px;
    padding-left: 1px;
    border-bottom: 1px solid #808080;
    box-shadow: inset 1px 0 #333;
  }

  .tabs button {
    padding: 0 4px 0 3px;
    border-right: 1px solid #808080;
    font: 700 10px/16px "Liberation Mono", monospace;
  }

  .tabs .cjk {
    padding: 0 2px 0 3px;
    font: 12px/16px "Liberation Sans", "Noto Sans CJK SC", sans-serif;
  }

  .tabs .cjk:nth-child(3) {
    padding: 0 3px 0 4px;
  }

  .tabs .on {
    background: #c0c0c0;
  }

  .tabs .red,
  .panel-tabs .red {
    color: red;
  }

  .zoom {
    display: flex;
    width: 51px;
    margin-left: auto;
    border-left: 1px solid #808080;
  }

  .zoom button {
    flex: 1;
    padding: 0;
  }

  .zoom button:last-child {
    border-right: 0;
  }

  .lower .cjk {
    padding: 0 4px;
  }

  .panel {
    display: flex;
    flex-direction: column;
    width: 341px;
    border-left: 1px solid #808080;
    font-size: 16px;
  }

  .panel b {
    font-size: 14px;
  }

  h2 {
    height: 28px;
    margin: 0;
    padding-left: 35px;
    border-bottom: 1px solid #808080;
    font-size: 16px;
    font-weight: 400;
    line-height: 27px;
  }

  table {
    width: 100%;
    padding: 1px 3px 1px 2px;
    border-bottom: 1px solid #808080;
    border-spacing: 0;
  }

  th,
  td {
    height: 19px;
    padding: 0;
    font-weight: 400;
    line-height: 19px;
    text-align: left;
  }

  td {
    text-align: right;
  }

  td b {
    line-height: 14px;
  }

  .breadth {
    display: grid;
    grid-template-columns: 135px 37px 60px 1fr;
    height: 21px;
    padding: 0 2px 0 1px;
    border-bottom: 1px solid #808080;
    line-height: 21px;
  }

  .breadth .down {
    text-align: right;
  }

  .caption {
    height: 20px;
    padding-left: 1px;
    font-size: 12px;
    line-height: 20px;
  }

  .caption span {
    margin-left: 5px;
  }

  .panel-tabs {
    display: flex;
    border: solid #808080;
    border-width: 1px 0;
    height: 16px;
  }

  .panel-tabs button {
    flex: 1;
    border-right: 1px solid #808080;
    font-size: 12px;
    line-height: 16px;
  }

  .side {
    display: flex;
    flex-direction: column;
    contain: size;
    width: 22px;
    padding-top: 1px;
    border-right: 2px solid #333;
    background: #f0f0f0;
    overflow: hidden;
  }

  .side button {
    display: flex;
    flex-shrink: 0;
    align-items: center;
    justify-content: center;
    height: 22px;
  }

  .side text {
    font-size: 12px;
    fill: #114499;
  }

  .side .narrow {
    font-size: 8px;
  }

  .side .bold {
    font-size: 10px;
    font-weight: 700;
  }

  .side .pressed {
    background: #fafafa;
    box-shadow: inset 1px 1px #999;
  }

  hr {
    flex-shrink: 0;
    width: 19px;
    height: 1px;
    margin: 3px auto 4px;
    border: 0;
    background: #999;
  }

  .status {
    display: flex;
    height: 22px;
    background: #f0f0f0;
    font-size: 16px;
    line-height: 22px;
    white-space: nowrap;
  }

  .status b {
    font-size: 14px;
  }

  .index {
    display: grid;
    grid-template-columns: 35px 68px 50px 58px 64px;
    padding-left: 1px;
  }

  .index + .index {
    padding-left: 0;
  }

  .total,
  .server {
    padding: 0 4px 0 2px;
    border-left: 1px solid #999;
  }

  .total b {
    margin-left: 2px;
  }

  .server {
    font-size: 12px;
  }

  .taskbar {
    position: relative;
    display: flex;
    height: 40px;
    background: #030405;
    color: #fff;
    overflow: hidden;
  }

  .ghost {
    position: absolute;
    right: 50px;
    top: 0;
    display: flex;
    gap: 16px;
    color: #222324;
    font-size: 44px;
    font-weight: 300;
    line-height: 40px;
    white-space: nowrap;
  }

  .start {
    width: 48px;
  }

  .start svg {
    display: block;
    margin: auto;
  }

  .search {
    display: flex;
    align-items: center;
    gap: 6px;
    width: 335px;
    padding-left: 9px;
    background: #333635;
  }

  .search input {
    flex: 1;
    min-width: 0;
    padding: 0;
    border: 0;
    outline: 0;
    background: none;
    color: #fff;
    font: 14px/20px "Noto Sans CJK SC", sans-serif;
  }

  .search input::placeholder {
    color: #9a9a9a;
    opacity: 1;
  }

  .plain {
    width: 47px;
  }

  .plain svg {
    display: block;
    margin: auto;
  }

  .apps {
    display: flex;
    gap: 9px;
    margin-left: 1px;
  }

  .apps button {
    display: flex;
    align-items: center;
    gap: 5px;
    width: 60px;
    border-bottom: 2px solid #9fcbee;
    padding-left: 2px;
    font-size: 13px;
  }

  .apps .current {
    width: 67px;
    margin-left: -4px;
    margin-right: -4px;
    padding-left: 6px;
    background: #373b3c;
  }

  .tray {
    display: flex;
    align-items: center;
    position: relative;
    margin-left: 6px;
  }

  .tray button {
    display: flex;
    align-items: center;
    justify-content: center;
    width: 32px;
  }

  .tray .keys {
    width: 38px;
  }

  .tray .lang {
    width: 26px;
    font-size: 16px;
  }

  .pointer {
    position: absolute;
    left: 9px;
    top: 266px;
    width: 86px;
    background: #f0f0f0;
    box-shadow: 0 2px 8px rgba(0, 0, 0, .4);
  }

  .pointer header {
    display: flex;
    justify-content: space-between;
    align-items: center;
    height: 26px;
    padding-left: 3px;
    border-bottom: 1px solid #999;
    background: #fff;
    color: #999;
    font: 13px/26px "Open Sans", sans-serif;
  }

  .pointer header button {
    width: 19px;
    height: 19px;
    margin-right: 1px;
    background: #c4c4c4;
    color: #fff;
    font-size: 10px;
    line-height: 17px;
  }

  .pens {
    display: grid;
    grid-template-columns: repeat(3, 28px);
    grid-auto-rows: 26px;
    padding: 1px 0 0;
  }

  .pens button {
    display: flex;
    align-items: center;
    justify-content: center;
  }

  .pens .picked {
    border: 1px solid #fff;
    border-color: #888 #fff #fff #888;
    background: #f8f8f8;
  }

  .combos {
    display: flex;
    gap: 2px;
    margin: 9px 0 0 3px;
  }

  .combo {
    position: relative;
    display: flex;
    box-sizing: border-box;
    width: 38px;
    height: 20px;
    border: 2px solid #777;
    border-right-color: #ddd;
    border-bottom-color: #ddd;
    background: #fff;
  }

  .combo select {
    flex: 1;
    min-width: 0;
    border: 0;
    padding: 0 0 0 1px;
    appearance: none;
    background: none;
    font: 12px/16px "Liberation Sans", sans-serif;
  }

  .combo i {
    width: 15px;
    background: #f0f0f0;
    box-shadow: inset -1px -1px #888, inset 1px 1px #fff;
    font: 7px/16px "DejaVu Sans", sans-serif;
    text-align: center;
  }

  .colour span {
    flex: 1;
    align-self: stretch;
    border: 2px solid #000;
    outline: 1px solid #fff;
    outline-offset: -3px;
    background: #00f;
  }

  .pointer p {
    margin: 5px 0 0;
    padding-bottom: 2px;
    color: red;
    font: 10px/14px "Liberation Mono", monospace;
    text-align: center;
  }

  .ime {
    position: absolute;
    right: 2px;
    bottom: 40px;
    display: flex;
    align-items: center;
    width: 180px;
    height: 24px;
    padding: 0 3px;
    border-radius: 4px;
    background: #fafbfd;
    box-shadow: 0 0 3px rgba(0, 0, 0, .4);
    color: #4a9be8;
    font: 700 15px/24px "Noto Sans CJK SC", sans-serif;
  }

  .ime button {
    display: flex;
    flex: 1;
    align-items: center;
    justify-content: center;
  }

  .site {
    position: absolute;
    right: 5px;
    bottom: 5px;
    width: 121px;
    height: 40px;
    background: #fff;
    color: #e8e8e8;
    font: 700 16px/40px "DejaVu Sans Condensed", sans-serif;
    text-align: center;
    text-shadow: 1px 1px 1px #666;
  }
</style>
